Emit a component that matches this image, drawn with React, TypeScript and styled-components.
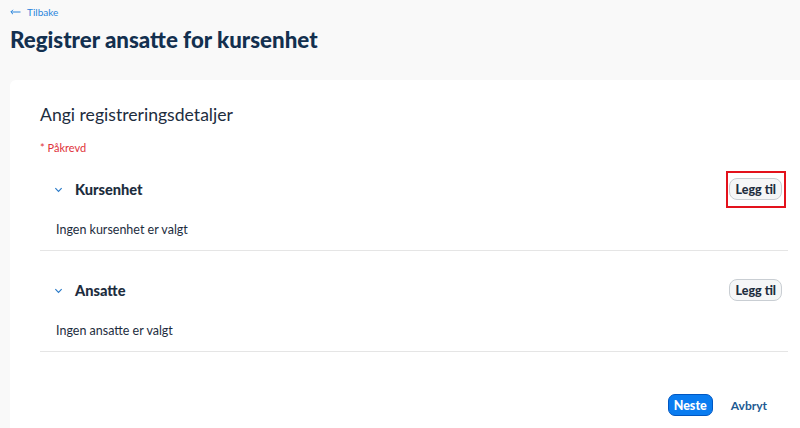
import styled, { createGlobalStyle } from "styled-components"

const GlobalStyle = createGlobalStyle`
  html, body {
    margin: 0;
    padding: 0;
    background: #f9f9f9;
    font-family: Lato, "Liberation Sans", Arial, sans-serif;
    color: #1d2d3e;
  }
  * {
    box-sizing: border-box;
  }
`

const Page = styled.div`
  width: 800px;
  height: 428px;
  overflow: hidden;
  display: flex;
  flex-direction: column;
`

const Header = styled.div`
  padding: 4px 10px 0 10px;
  height: 80px;
`

const BackLink = styled.a`
  display: flex;
  align-items: center;
  gap: 6px;
  height: 16px;
  font-size: 10px;
  color: #2a85dc;
  text-decoration: none;
`

const Title = styled.h1`
  margin: 5px 0 0 0;
  font-size: 22.3px;
  line-height: 30px;
  font-weight: 900;
  color: #13304f;
`

const Card = styled.div`
  flex: 1;
  margin-left: 10px;
  background: #ffffff;
  border-top-left-radius: 6px;
  padding: 23px 12px 0 30px;
`

const Heading = styled.h2`
  margin: 0;
  font-size: 17.6px;
  line-height: 24px;
  font-weight: 400;
  color: #1d2d3e;
`

const Required = styled.div`
  margin-top: 14px;
  font-size: 11px;
  line-height: 14px;
  color: #e0323a;
`

const SectionList = styled.div`
  margin-top: -5px;
`

const Section = styled.div`
  padding: 22px 0 12px 0;
  border-bottom: 1px solid #e5e5e5;
`

const SectionHeader = styled.div`
  display: flex;
  align-items: center;
  height: 34px;
  padding-left: 14px;
`

const Chevron = styled.svg`
  width: 9px;
  height: 9px;
  margin-right: 12px;
`

const SectionTitle = styled.div`
  flex: 1;
  font-size: 14.6px;
  font-weight: 900;
  color: #1d2d3e;
`

const ButtonSlot = styled.div`
  position: relative;
  margin-right: 6px;
`

const Highlight = styled.div`
  position: absolute;
  left: -3px;
  right: -4px;
  top: -7px;
  bottom: -8px;
  border: 2px solid #e3121c;
  pointer-events: none;
`

const GhostButton = styled.button`
  height: 22px;
  padding: 0 5px;
  border: 1px solid #c9ced3;
  border-radius: 8px;
  background: #f5f6f7;
  font-family: inherit;
  font-size: 12.5px;
  font-weight: 900;
  color: #1d2d3e;
`

const EmptyText = styled.div`
  margin-top: 16px;
  padding-left: 16px;
  font-size: 12.5px;
  line-height: 16px;
  color: #1d2d3e;
`

const Footer = styled.div`
  display: flex;
  justify-content: flex-end;
  align-items: center;
  gap: 10px;
  margin-top: 42px;
  padding-right: 13px;
`

const PrimaryButton = styled.button`
  height: 22px;
  padding: 0 5px;
  border: 1px solid #0057c2;
  border-radius: 7px;
  background: #0a7cf0;
  color: #ffffff;
  font-family: inherit;
  font-size: 12.5px;
  font-weight: 900;
`

const TextButton = styled.button`
  height: 22px;
  padding: 0 8px;
  border: none;
  background: transparent;
  color: #1d5a92;
  font-family: inherit;
  font-size: 12px;
  font-weight: 700;
`

type SectionProps = {
  title: string
  empty: string
  highlighted?: boolean
}

const PickerSection = ({ title, empty, highlighted }: SectionProps) => {
  return (
    <Section>
      <SectionHeader>
        <Chevron viewBox="0 0 10 10">
          <path d="M1.5 3.5 L5 7 L8.5 3.5" fill="none" stroke="#2a7ac8" strokeWidth="1.3" />
        </Chevron>
        <SectionTitle>{title}</SectionTitle>
        <ButtonSlot>
          <GhostButton>Legg til</GhostButton>
          {highlighted && <Highlight />}
        </ButtonSlot>
      </SectionHeader>
      <EmptyText>{empty}</EmptyText>
    </Section>
  )
}

export default function App() {
  return (
    <>
      <GlobalStyle />
      <Page>
        <Header>
          <BackLink href="#">
            <svg width="11" height="6" viewBox="0 0 11 6">
              <path d="M10.5 3 H1 M3 0.8 L0.8 3 L3 5.2" fill="none" stroke="#2a85dc" strokeWidth="1" />
            </svg>
            Tilbake
          </BackLink>
          <Title>Registrer ansatte for kursenhet</Title>
        </Header>
        <Card>
          <Heading>Angi registreringsdetaljer</Heading>
          <Required>* Påkrevd</Required>
          <SectionList>
            <PickerSection title="Kursenhet" empty="Ingen kursenhet er valgt" highlighted />
            <PickerSection title="Ansatte" empty="Ingen ansatte er valgt" />
          </SectionList>
          <Footer>
            <PrimaryButton>Neste</PrimaryButton>
            <TextButton>Avbryt</TextButton>
          </Footer>
        </Card>
      </Page>
    </>
  )
}
